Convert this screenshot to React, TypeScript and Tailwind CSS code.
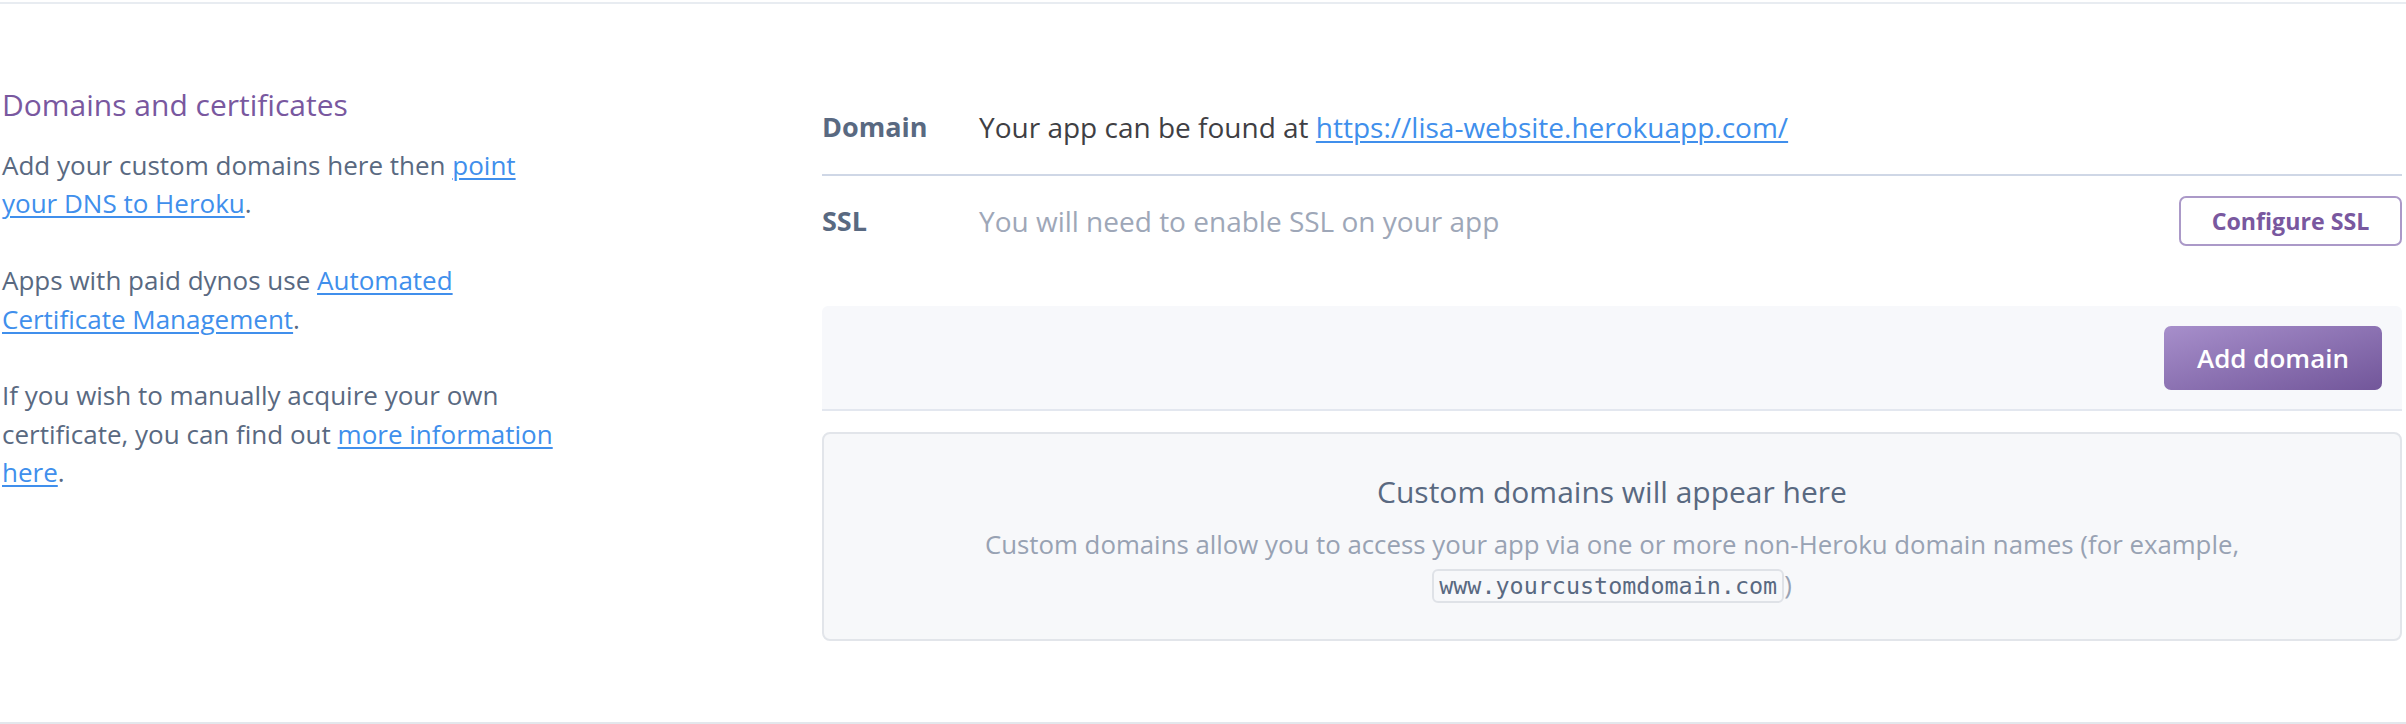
import React from "react";

const sans = "font-['Open_Sans',sans-serif]";

function Link({ children }: { children: React.ReactNode }) {
  return (
    <a
      href="#"
      className="text-[#408fec] underline decoration-2 underline-offset-[3px]"
    >
      {children}
    </a>
  );
}

export default function App() {
  return (
    <div className={`bg-white pt-[2px] ${sans}`}>
      <div className="flex border-t-2 border-b-2 border-t-[#e8ecf1] border-b-[#e3e7ec] pt-[76px] pb-[81px] pr-[4px]">
        {/* Left description column */}
        <div className="w-[822px] shrink-0 pl-[2px]">
          <div className="w-[560px] mt-[5px]">
            <h3 className="text-[30px] leading-[40px] font-normal text-[#79589f]">
              Domains and certificates
            </h3>
            <div className="mt-[21px] text-[26px] leading-[38.4px] text-[#596981]">
              <p>
                Add your custom domains here then{" "}
                <Link>point your DNS to Heroku</Link>.
              </p>
              <p className="mt-[38.4px]">
                Apps with paid dynos use{" "}
                <Link>Automated Certificate Management</Link>.
              </p>
              <p className="mt-[38.4px]">
                If you wish to manually acquire your own certificate, you can
                find out <Link>more information here</Link>.
              </p>
            </div>
          </div>
        </div>

        {/* Right content */}
        <div className="flex-1 min-w-0">
          <div className="flex items-center h-[96px] border-b-2 border-[#cfd7e6]">
            <div className="w-[157px] shrink-0 text-[27px] font-bold text-[#596981]">
              Domain
            </div>
            <div className="text-[28px] text-[#3f3f44]">
              Your app can be found at{" "}
              <a
                href="#"
                className="text-[#408fec] underline decoration-2 underline-offset-[3px]"
              >
                https://lisa-website.herokuapp.com/
              </a>
            </div>
          </div>
          <div className="flex items-center h-[90px]">
            <div className="w-[157px] shrink-0 text-[27px] font-bold text-[#596981]">
              SSL
            </div>
            <div className="flex-1 text-[28px] text-[#9ea7b8]">
              You will need to enable SSL on your app
            </div>
            <button className="h-[50px] w-[223px] rounded-[7px] border-2 border-[#ab99c8] bg-white text-[23.2px] font-bold text-[#79589f]">
              Configure SSL
            </button>
          </div>

          <div className="mt-[40px] flex justify-end rounded-t-[6px] border-b-2 border-[#e3e7ef] bg-[#f7f8fb] pt-[20px] pb-[19px] pr-[20px]">
            <button className="h-[64px] w-[218px] rounded-[7px] bg-linear-to-br from-[#a78fcb] to-[#72569a] text-[26px] font-semibold text-white">
              Add domain
            </button>
          </div>

          <div className="mt-[21px] rounded-[8px] border-2 border-[#e2e5ea] bg-[#f7f8fa] px-[60px] pt-[38px] pb-[35px] text-center">
            <div className="text-[30px] leading-[40px] text-[#596981]">
              Custom domains will appear here
            </div>
            <p className="mt-[12px] text-[25.8px] leading-[40px] text-[#98a2b3]">
              Custom domains allow you to access your app via one or more
              non-Heroku domain names (for example,{" "}
              <code className="inline-block rounded-[6px] border-2 border-[#dfe2e7] bg-[#f7f8fa] px-[5px] leading-[30px] text-[23.4px] text-[#596981] font-['DejaVu_Sans_Mono',monospace]">
                www.yourcustomdomain.com
              </code>
              )
            </p>
          </div>
        </div>
      </div>
    </div>
  );
}
